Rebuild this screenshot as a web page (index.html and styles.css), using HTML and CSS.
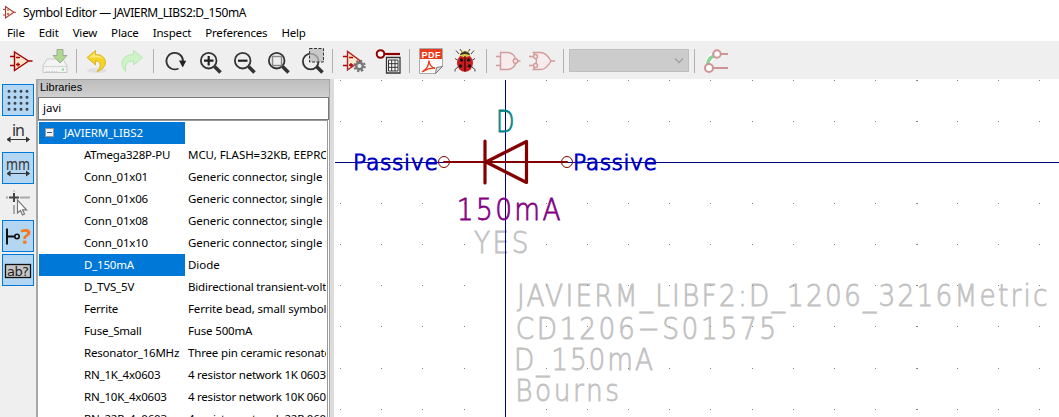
FILE: index.html
```html
<!DOCTYPE html>
<html lang="en">
<head>
<meta charset="utf-8">
<title>Symbol Editor</title>
<link rel="stylesheet" href="styles.css">
</head>
<body>
<div class="window">
  <header class="titlebar">
    <svg class="app-icon" width="16" height="16" viewBox="1 3 16 16"><path d="M5.5 5.5V17L14 11.3Z" fill="#fbeed6" stroke="#a33c3c" stroke-width="1.1"/><path d="M3 8.500h3M3 14h3M14 11.300h2M7 9h2M7 13h2M8 12v2" stroke="#b04444"/></svg>
    <span class="title">Symbol Editor — JAVIERM_LIBS2:D_150mA</span>
  </header>
  <nav class="menubar"><span>File</span><span>Edit</span><span>View</span><span>Place</span><span>Inspect</span><span>Preferences</span><span>Help</span></nav>
  <div class="toolbar">
    <svg class="tool" viewBox="3 44 34 34"><path d="M14.500 52V70.500L28.500 61Z" fill="#f8e7cc" stroke="#a90000" stroke-width="1.400"/><path d="M10 56.500h4M10 65.500h4M29 61h3.500M16 57.500h4M16 64.500h4M18 62.500v4" stroke="#a90000" stroke-width="1.300"/></svg>
    <svg class="tool" viewBox="37 44 34 34"><path d="M47 59h16l4 7v6.500H43V66Z" fill="#f3f3f3" stroke="#c9c9c9"/><path d="M43.500 66.500h23" stroke="#d2d2d2"/><path d="M46 71.500h11" stroke="#ccc" stroke-dasharray="1.500 1"/><rect x="62" y="68.500" width="2" height="2" fill="#7ee096"/><path d="M57 49.500h6v6h4L60 63l-7-7.500h4Z" fill="#afd88e" stroke="#9aaa93"/></svg>
    <i class="sep"></i>
    <svg class="tool" viewBox="80 44 34 34"><ellipse cx="97" cy="70.500" rx="10" ry="2.500" fill="#e0e0e0"/><path d="M87 57.500L95.500 50.500V54.500C108 54.500 109 68 97 71.500C102 66 101 61 95.500 61V65Z" fill="#f5d328" stroke="#d6aa0c" stroke-width=".8"/><path d="M89 57.500l6-4.500v2.500c5 0 7 2 8 4-2-2-5-2.500-8-2Z" fill="#fbe985"/></svg>
    <svg class="tool" viewBox="114 44 34 34"><path d="M142.500 57.500L133.500 50.500V54.500C121 54.500 119 66 126 71.500C124 65 127 61 133.500 61V65Z" fill="#cdf3c6" stroke="#b0e4ab" stroke-width=".9"/></svg>
    <i class="sep"></i>
    <svg class="tool" viewBox="157 44 34 34"><path d="M178.500 68.500A8.300 8.300 0 1 1 183 61.500" fill="none" stroke="#333" stroke-width="1.800"/><path d="M179 60.500l7.200.3-3.500 6.700Z" fill="#222"/></svg>
    <svg class="tool" viewBox="191 44 34 34"><path d="M214.500 66.500l6 6" stroke="#333" stroke-width="3.600"/><circle cx="208.700" cy="60.700" r="7.800" fill="#eee" stroke="#333" stroke-width="1.800"/><path d="M204 60.700h9.500M208.700 56v9.500" stroke="#222" stroke-width="2.200"/></svg>
    <svg class="tool" viewBox="225 44 34 34"><path d="M248.500 66.500l6 6" stroke="#333" stroke-width="3.600"/><circle cx="242.700" cy="60.700" r="7.800" fill="#eee" stroke="#333" stroke-width="1.800"/><path d="M238 60.700h9.500" stroke="#222" stroke-width="2.200"/></svg>
    <svg class="tool" viewBox="259 44 34 34"><path d="M282.500 66.500l6 6" stroke="#333" stroke-width="3.600"/><circle cx="276.700" cy="60.700" r="7.800" fill="#eee" stroke="#333" stroke-width="1.800"/><rect x="272.500" y="56.500" width="9" height="9" fill="#eee" stroke="#888" stroke-width="1.400"/></svg>
    <svg class="tool" viewBox="293 44 34 34"><path d="M316.500 66.500l6 6" stroke="#333" stroke-width="3.600"/><circle cx="310.700" cy="61.500" r="7.800" fill="#eee" stroke="#333" stroke-width="1.800"/><rect x="309.500" y="48.500" width="14" height="13.500" fill="#bbb" fill-opacity=".75" stroke="#333" stroke-dasharray="3 1.500"/></svg>
    <i class="sep"></i>
    <svg class="tool" viewBox="336 44 34 34"><path d="M347.500 51.500V70L360.500 61Z" fill="#f8e7cc" stroke="#b22222" stroke-width="1.400"/><path d="M343 56.500h4M343 65.500h4M349 57.500h4M349 65h4M351 63v4" stroke="#b00000" stroke-width="1.300"/><circle cx="359.500" cy="66" r="5.200" fill="none" stroke="#777" stroke-width="2" stroke-dasharray="2.200 1.884"/><circle cx="359.500" cy="66" r="3.300" fill="#eee" stroke="#777" stroke-width="2.400"/></svg>
    <svg class="tool" viewBox="370 44 34 34"><path d="M384 54h16" stroke="#900000" stroke-width="2.200"/><circle cx="380.500" cy="54" r="3.800" fill="#fff" stroke="#900000" stroke-width="2"/><path d="M386.500 57.500h13.500v15.500h-13.500Z" fill="#fff" stroke="#333" stroke-width="1.300"/><path d="M388.500 60h9.500v11h-9.500ZM388.500 63.700h9.500M388.500 67.300h9.500M391.700 60v11M395 60v11" fill="none" stroke="#333"/></svg>
    <i class="sep"></i>
    <svg class="tool" viewBox="413 44 34 34"><path d="M419.500 48.500h23v18l-7 7h-16Z" fill="#fafafa" stroke="#aaa"/><path d="M442.500 66.500l-7 7 1-6Z" fill="#ddd" stroke="#666" stroke-width=".8"/><rect x="420" y="49" width="22" height="10" fill="#e93c1c"/><text class="pdf" x="421.500" y="57.500" textLength="19">PDF</text><path d="M422 72q7-4 7-11.500M423 71.500q6-4 12-3.500M429 61q1 6 6 7.500" fill="none" stroke="#e93c1c" stroke-width="1.400"/></svg>
    <svg class="tool" viewBox="447 44 34 34"><path d="M459 54l-3-3.500M471 54l3-3.500M457.500 60l-2.500-1.500M472.500 60l2.500-1.500M458 67l-3 2.500v2M472 67l3 2.500v2M462 52l-2-3M468 52l2-3" stroke="#444" fill="none"/><path d="M460 55c1-5 9-5 10 0Z" fill="#333"/><path d="M461.500 51.500h2M466.500 51.500h2" stroke="#f2d839" stroke-width="1.500"/><ellipse cx="465" cy="63" rx="8" ry="8.800" fill="#c71f22"/><path d="M459 55.500q6-3 12 0l-6 2Z" fill="#e3c944"/><path d="M465 56v15.500" stroke="#400" stroke-width="1.200"/><g fill="#251010"><circle cx="461.500" cy="60" r="1.800"/><circle cx="468.500" cy="60" r="1.800"/><circle cx="460.500" cy="66" r="1.800"/><circle cx="469.500" cy="66" r="1.800"/></g></svg>
    <i class="sep"></i>
    <svg class="tool" viewBox="490 44 34 34"><g fill="#f6ecec" stroke="#d39b9b" stroke-width="1.400"><path d="M496 56.500h5M496 65.500h5M517.500 61h3"/><path d="M500.500 52.500h7a8.500 8.500 0 0 1 0 17h-7Z"/><circle cx="515.500" cy="61" r="2.200"/></g></svg>
    <svg class="tool" viewBox="524 44 34 34"><g fill="#f6ecec" stroke="#d39b9b" stroke-width="1.400"><path d="M529 56.500h5M529 65.500h5M551 61h4"/><path d="M533.500 52.500h7c5 0 8 4 10.500 8.500-2.500 4.500-5.500 8.500-10.500 8.500h-7q6-8.500 0-17Z"/><circle cx="535.500" cy="56.500" r="2"/><circle cx="535.500" cy="65.500" r="2"/></g></svg>
    <i class="sep"></i>
    <div class="combo"><svg width="10" height="7" viewBox="0 0 10 7"><path d="M1 1.500l4 4 4-4" fill="none" stroke="#a0a0a0" stroke-width="1.300"/></svg></div>
    <i class="sep"></i>
    <svg class="tool" viewBox="698 44 34 34"><path d="M708 66q0-8 7-11" stroke="#fff" stroke-width="6" fill="none"/><path d="M707.500 66q0-7 6-10" stroke="#8ad596" stroke-width="3.500" fill="none"/><path d="M712 53l5 1-2 5" fill="#8ad596"/><path d="M719 54h9M712 68h16" stroke="#cf9494" stroke-width="2"/><g fill="#fff" stroke="#cf9494" stroke-width="2"><circle cx="717" cy="54" r="3.700"/><circle cx="709" cy="68" r="4"/></g></svg>
  </div>
  <main class="workspace">
    <aside class="options">
      <div class="opt on"><svg viewBox="2 84 32 32"><path d="M7.500 91.300h20M7.500 97.300h20M7.500 103.300h20M7.500 109.300h20" stroke="#3c4650" stroke-width="3" stroke-linecap="round" stroke-dasharray="0 6" transform="translate(1.500)"/></svg></div>
      <div class="opt"><svg viewBox="2 118 32 32"><text class="unit" x="12" y="135.500" textLength="13">in</text><path d="M8 139.500h20M10.500 137l-3.500 2.500 3.500 2.500M26 137l3.500 2.500-3.500 2.500" fill="#333" stroke="#333"/></svg></div>
      <div class="opt on"><svg viewBox="2 152 32 32"><text class="unit" x="6" y="169.500" textLength="24" lengthAdjust="spacingAndGlyphs">mm</text><path d="M8 173.500h20M10.500 171l-3.500 2.500 3.500 2.500M26 171l3.500 2.500-3.500 2.500" fill="#333" stroke="#333"/></svg></div>
      <div class="opt"><svg viewBox="2 186 32 32"><path d="M6 197.500h2M20 197.500h10M14 205v9" stroke="#aaa" stroke-width="2"/><path d="M9 197.500h10M14 193v9" stroke="#444" stroke-width="2"/><path d="M14 190v2" stroke="#aaa"/><path d="M17.500 200v13l3-2.500 2 4.500 2-1-2-4.200h4Z" fill="#fff" stroke="#777" stroke-width="1.200"/></svg></div>
      <div class="opt on"><svg viewBox="2 220 32 32"><path d="M7 228.500v16M8 236.500h7" stroke="#111" stroke-width="2"/><circle cx="17" cy="236.500" r="2.200" fill="none" stroke="#111" stroke-width="1.600"/><text class="query" x="20.500" y="243.500">?</text></svg></div>
      <div class="opt on"><svg viewBox="2 254 32 32"><rect x="5.500" y="264.500" width="25" height="13" fill="#c6c6c6" stroke="#111" stroke-width="1.300"/><text class="ab" x="7" y="275.500" textLength="22">ab?</text></svg></div>
    </aside>
    <section class="libraries">
      <h2 class="caption">Libraries</h2>
      <div class="search">javi</div>
      <div class="tree">
        <div class="row root"><span class="name sel"><i class="toggle"></i>JAVIERM_LIBS2</span></div>
        <div class="row"><span class="name">ATmega328P-PU</span><span class="desc">MCU, FLASH=32KB, EEPROM=1KB</span></div>
        <div class="row"><span class="name">Conn_01x01</span><span class="desc">Generic connector, single row</span></div>
        <div class="row"><span class="name">Conn_01x06</span><span class="desc">Generic connector, single row</span></div>
        <div class="row"><span class="name">Conn_01x08</span><span class="desc">Generic connector, single row</span></div>
        <div class="row"><span class="name">Conn_01x10</span><span class="desc">Generic connector, single row</span></div>
        <div class="row"><span class="name sel">D_150mA</span><span class="desc">Diode</span></div>
        <div class="row"><span class="name">D_TVS_5V</span><span class="desc tight">Bidirectional transient-voltage</span></div>
        <div class="row"><span class="name">Ferrite</span><span class="desc tight">Ferrite bead, small symbol</span></div>
        <div class="row"><span class="name">Fuse_Small</span><span class="desc tight">Fuse 500mA</span></div>
        <div class="row"><span class="name">Resonator_16MHz</span><span class="desc tight">Three pin ceramic resonator</span></div>
        <div class="row"><span class="name">RN_1K_4x0603</span><span class="desc tighter">4 resistor network 1K 0603</span></div>
        <div class="row"><span class="name">RN_10K_4x0603</span><span class="desc tighter">4 resistor network 10K 0603</span></div>
        <div class="row"><span class="name">RN_22R_4x0603</span><span class="desc tighter">4 resistor network 22R 0603</span></div>
      </div>
    </section>
    <div class="sash"></div>
    <svg class="canvas" width="725" height="338" viewBox="334 79 725 338">
      <defs><path id="dots" d="M340 .5h1M381 .5h1M422 .5h1M464 .5h1M546 .5h1M587 .5h1M628 .5h1M669 .5h1M710 .5h1M752 .5h1M793 .5h1M834 .5h1M875 .5h1M916 .5h2M957 .5h1M998 .5h1M1039 .5h1"/></defs>
      <g class="field grey" transform="scale(.88 1)">
        <text x="538.600" y="253" textLength="62">YES</text>
        <text x="587.500" y="306" textLength="603">JAVIERM_LIBF2:D_1206_3216Metric</text>
        <text x="586" y="339" textLength="296">CD1206−S01575</text>
        <text x="584" y="370" textLength="158">D_150mA</text>
        <text x="585.500" y="401" textLength="118">Bourns</text>
      </g>
      <g class="grid"><use href="#dots" y="80"/><use href="#dots" y="121"/><use href="#dots" y="203"/><use href="#dots" y="244"/><use href="#dots" y="285"/><use href="#dots" y="326"/><use href="#dots" y="368"/><use href="#dots" y="409"/></g>
      <path class="axis" d="M335 162.500H1059M505.500 80V417"/>
      <g class="field" transform="scale(.88 1)"><text class="teal" x="563.600" y="132" textLength="21" lengthAdjust="spacingAndGlyphs">D</text><text class="purple" x="519" y="220" textLength="118">150mA</text></g>
      <g class="pin"><text x="353" y="170" textLength="85">Passive</text><text x="573" y="170" textLength="84">Passive</text></g>
      <g class="symbol"><path d="M444 162H567" stroke-width="2"/><path d="M485 141V183M526.500 141.500V182.500L486 162Z" stroke-width="3.200"/><circle cx="444" cy="162" r="5.500"/><circle cx="567" cy="162" r="5.500"/></g>
    </svg>
  </main>
</div>
</body>
</html>
```

FILE: styles.css
```css
* { box-sizing: border-box; }
body { margin: 0; background: #fff; color: #000; font-family: "Noto Sans", "Open Sans", sans-serif; font-size: 11.5px; }
.window { width: 1059px; height: 417px; overflow: hidden; display: flex; flex-direction: column; }
.titlebar { height: 24px; flex: none; display: flex; align-items: center; padding-left: 1px; gap: 6px; }
.title { font-size: 12px; letter-spacing: -.38px; white-space: nowrap; }
.menubar { height: 17px; flex: none; display: flex; gap: 14px; padding-left: 7px; line-height: 17px; letter-spacing: -.17px; }
.toolbar { height: 38px; flex: none; display: flex; align-items: center; padding: 2px 0 0 3px; background: #efefef; }
.tool { width: 34px; height: 34px; flex: none; }
.sep { width: 9px; height: 24px; flex: none; background: linear-gradient(#b0b0b0, #b0b0b0) 5px 0 / 1px 100% no-repeat; }
.combo { width: 120px; height: 23px; flex: none; margin: -1px 0 0 2px; background: #ccc; border: 1px solid #bfbfbf; display: flex; align-items: center; justify-content: flex-end; padding-right: 4px; }
.pdf { font: bold 9px "Liberation Sans", sans-serif; fill: #fff; }
.workspace { height: 338px; display: flex; }
.options { width: 36px; flex: none; background: #efefef; padding: 5px 0 0 2px; display: flex; flex-direction: column; gap: 2px; }
.opt { width: 32px; height: 32px; }
.opt svg { display: block; width: 32px; height: 32px; }
.on { background: #b3d7f3; box-shadow: inset 0 0 0 1px #0078d7; }
.unit { font: 16px "Noto Sans", sans-serif; fill: #333; }
.query { font: bold 22px "Noto Sans", sans-serif; fill: #f47a20; }
.ab { font: 13px "DejaVu Sans", sans-serif; fill: #222; }
.libraries { width: 294px; flex: none; border-left: 2px solid #a6a6a6; border-right: 1px solid #a6a6a6; display: flex; flex-direction: column; overflow: hidden; }
.caption { margin: 0; height: 18px; flex: none; border-top: 1px solid #a6a6a6; background: linear-gradient(#bdbdbd, #d0d0d0); padding-left: 2px; font: 11px/15px "Liberation Sans", sans-serif; }
.search { height: 23px; flex: none; border: 1px solid #7a7a7a; padding-left: 4px; line-height: 20px; }
.tree { flex: 1; border-top: 1px solid #999; border-right: 1px solid #999; margin-right: 1px; padding: 1px 1px 0 1px; overflow: hidden; }
.row { height: 22px; display: flex; line-height: 21px; white-space: nowrap; }
.name { width: 146px; flex: none; padding-left: 45px; letter-spacing: -.2px; }
.root .name { padding-left: 6px; padding-bottom: 1px; display: flex; align-items: center; gap: 10px; letter-spacing: -.1px; }
.desc { flex: 1; min-width: 0; overflow: hidden; margin-left: 3px; letter-spacing: -.05px; }
.tight { letter-spacing: -.16px; }
.tighter { letter-spacing: -.24px; }
.sel { background: #0078d7; color: #fff; }
.toggle { width: 9px; height: 9px; flex: none; border: 1px solid #999; background: linear-gradient(#345aa0, #345aa0) 1px 3px / 5px 1px no-repeat #f3f3f3; }
.sash { width: 4px; flex: none; background: #dcdcdc; }
.canvas { flex: none; display: block; background: #fff; }
.field text { font: 200 30px "DejaVu Sans", sans-serif; stroke-width: .8px; }
.grey { fill: #c2c2c2; stroke: #c2c2c2; }
.teal { fill: #008484; stroke: #008484; }
.purple { fill: #840084; stroke: #840084; }
.pin text { font: 200 22px "DejaVu Sans", sans-serif; fill: #0000c2; stroke: #0000c2; stroke-width: 1.1px; }
.grid { stroke: #848484; shape-rendering: crispEdges; }
.axis { stroke: #000084; fill: none; shape-rendering: crispEdges; }
.symbol { stroke: #840000; fill: none; stroke-linejoin: round; stroke-linecap: round; }
```
